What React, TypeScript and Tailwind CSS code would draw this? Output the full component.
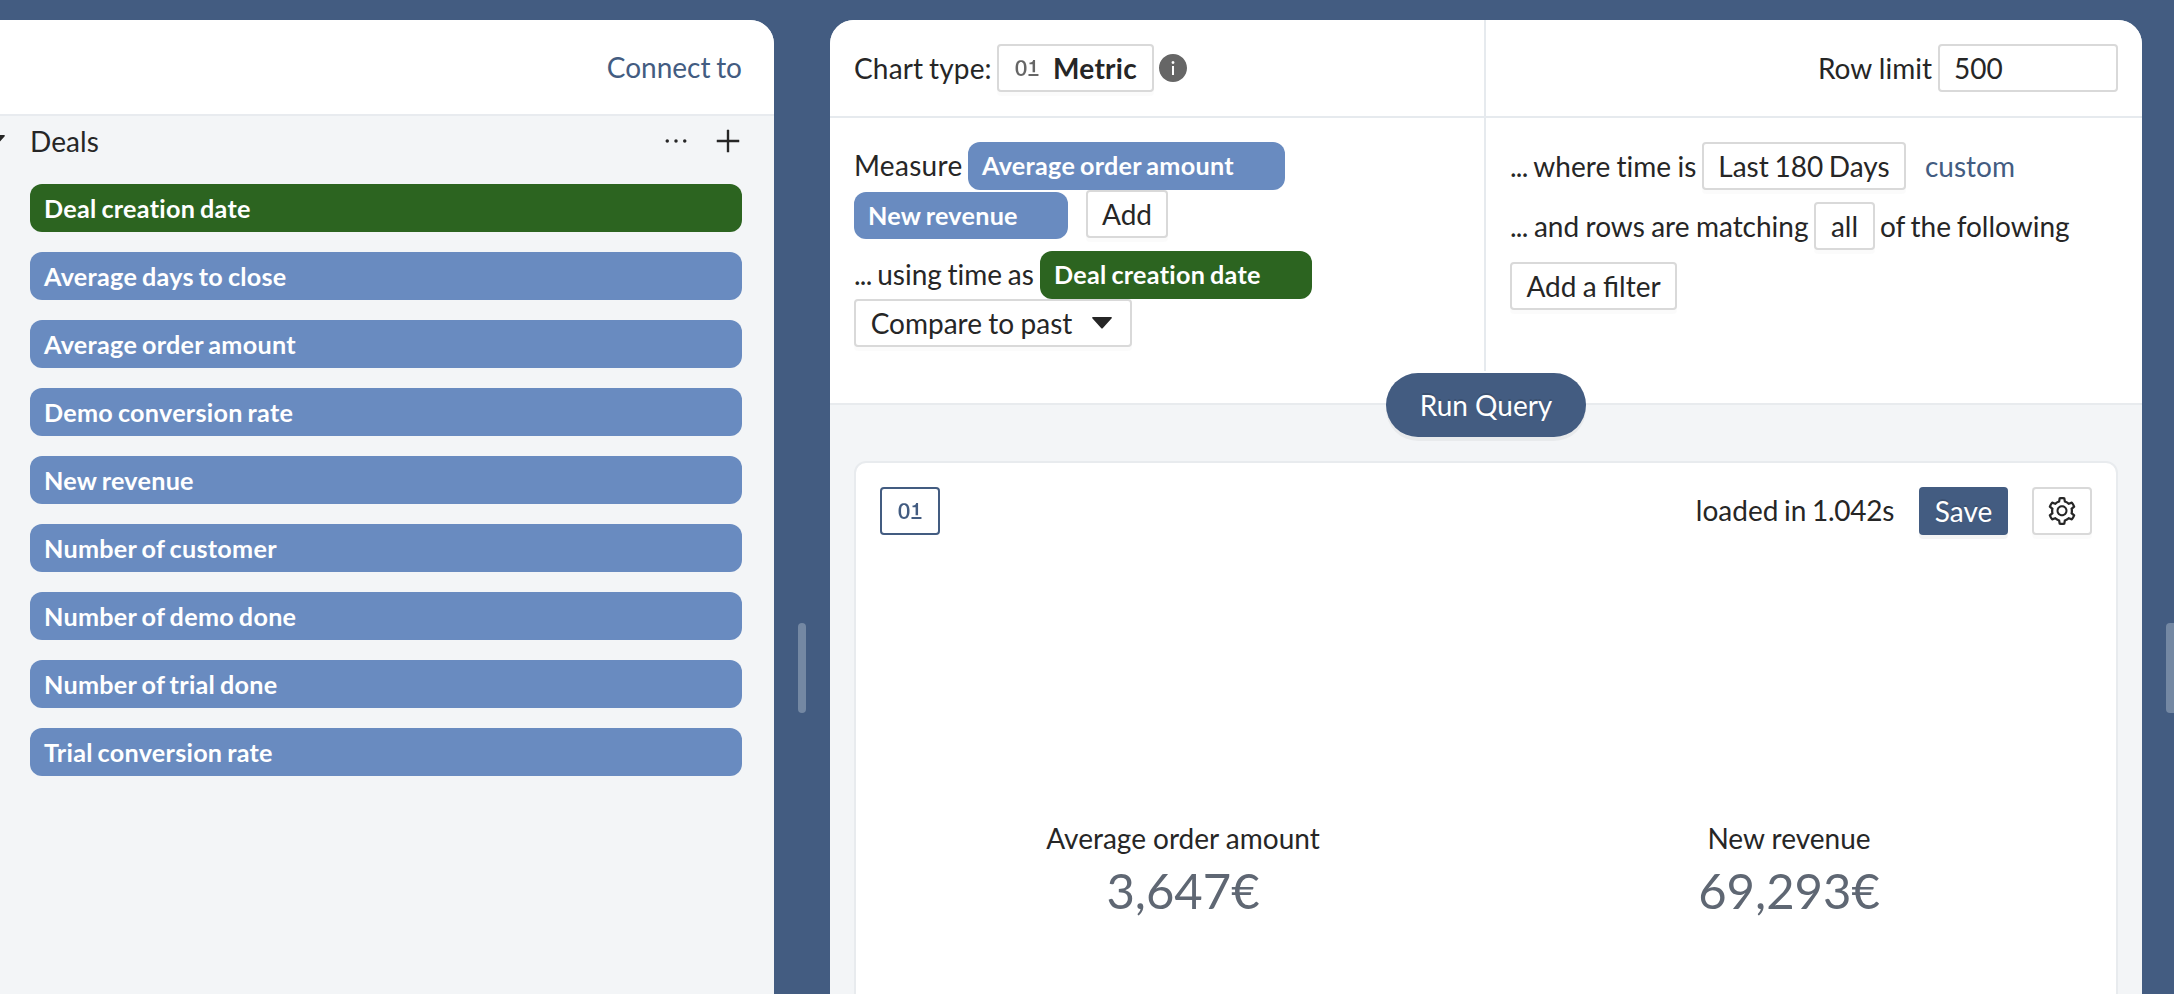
import React from "react";
import {
  AiFillInfoCircle,
  AiOutlineEllipsis,
  AiOutlineFieldBinary,
  AiOutlinePlus,
  AiOutlineSetting,
} from "react-icons/ai";

const measures = [
  "Average days to close",
  "Average order amount",
  "Demo conversion rate",
  "New revenue",
  "Number of customer",
  "Number of demo done",
  "Number of trial done",
  "Trial conversion rate",
];

const metrics = [
  { label: "Average order amount", value: "3,647€" },
  { label: "New revenue", value: "69,293€" },
];

function Pill({ children, className }: { children: React.ReactNode; className: string }) {
  return (
    <div
      className={`flex shrink-0 items-center whitespace-nowrap rounded-xl pl-3.5 pt-px text-[25.2px] font-bold leading-none tracking-[0.26px] text-white ${className}`}
    >
      {children}
    </div>
  );
}

function Button({ children, className = "" }: { children: React.ReactNode; className?: string }) {
  return (
    <button
      className={`flex h-12 shrink-0 items-center justify-center whitespace-nowrap rounded border-2 border-[#d9d9d9] bg-white shadow-[0_4px_0_rgba(0,0,0,0.015)] ${className}`}
    >
      {children}
    </button>
  );
}

function Dots() {
  return <span className="tracking-[-0.75px]">...</span>;
}

function Caret() {
  return (
    <svg className="shrink-0" width="20" height="12" viewBox="0 0 20 12" fill="currentColor">
      <path d="M1 0h18c.8 0 1.200.8.700 1.300L10.700 11.200a1 1 0 0 1-1.400 0L.3 1.300C-.2.8.2 0 1 0z" />
    </svg>
  );
}

function Sidebar() {
  return (
    <aside className="flex h-[974px] w-[774px] shrink-0 flex-col overflow-hidden rounded-tr-3xl bg-[#f3f5f7]">
      <header className="flex h-24 items-center justify-end border-b-2 border-[#e8ebef] bg-white pr-8 text-[#435c81]">
        Connect to
      </header>
      <div className="flex h-[50px] items-center">
        <div className="-ml-[15px] flex w-[45px] items-center">
          <Caret />
        </div>
        <span className="grow pb-px tracking-[0.1px]">Deals</span>
        <AiOutlineEllipsis size={32} />
        <AiOutlinePlus size={32} className="ml-5 mr-[30px]" />
      </div>
      <div className="mt-[18px] flex flex-col gap-5 pl-[30px] pr-8">
        <Pill className="h-12 bg-[#2c6420]">Deal creation date</Pill>
        {measures.map((name) => (
          <Pill key={name} className="h-12 bg-[#698bc0]">
            {name}
          </Pill>
        ))}
      </div>
    </aside>
  );
}

function QueryForm() {
  return (
    <section className="relative h-[385px] shrink-0 border-b-2 border-[#e8ebee] bg-white">
      <div className="flex h-[98px] border-b-2 border-[#e6eaee]">
        <div className="flex w-[656px] items-center border-r-2 border-[#e6eaee] pl-6">
          <span className="w-[143px] whitespace-nowrap tracking-[0.15px]">Chart type:</span>
          <Button className="w-[157px] gap-2.5 pr-[3px]">
            <AiOutlineFieldBinary size={32} className="text-[#666666]" />
            <span className="font-bold tracking-[0.25px]">Metric</span>
          </Button>
          <AiFillInfoCircle size={32} className="ml-[3px] text-[#666666]" />
        </div>
        <div className="flex grow items-center justify-end pr-6">
          <span className="mr-1.5 [word-spacing:0px]">Row limit</span>
          <div className="flex h-12 w-[180px] items-center rounded border-2 border-[#d9d9d9] pl-3.5">500</div>
        </div>
      </div>
      <div className="flex h-[285px] whitespace-nowrap">
        <div className="flex w-[654px] flex-col pl-6 pt-6">
          <div className="flex h-12 items-center">
            <span className="w-[114px] pb-[3px] tracking-[0.3px]">Measure</span>
            <Pill className="h-12 w-[317px] bg-[#698bc0] pb-0.5">Average order amount</Pill>
          </div>
          <div className="flex h-12 items-start">
            <Pill className="mt-0.5 h-[47px] w-[214px] bg-[#698bc0]">New revenue</Pill>
            <Button className="ml-[18px] w-[82px]">Add</Button>
          </div>
          <div className="mt-[13px] flex h-12 items-center">
            <span className="w-[186px] pb-[3px]">
              <Dots /> using time as
            </span>
            <Pill className="h-12 w-[272px] bg-[#2c6420] pb-0.5">Deal creation date</Pill>
          </div>
          <div className="flex">
            <Button className="w-[278px] gap-5 pr-[3px]">
              <span className="[word-spacing:-0.8px]">Compare to past</span>
              <Caret />
            </Button>
          </div>
        </div>
        <div className="h-[253px] w-0.5 bg-[#e6eaee]" />
        <div className="flex grow flex-col gap-3 pl-6 pt-6">
          <div className="flex h-12 items-center">
            <span className="w-48 [word-spacing:-0.8px]">
              <Dots /> where time is
            </span>
            <Button className="w-[204px] [word-spacing:-1.5px]">Last 180 Days</Button>
            <span className="ml-[19px] text-[#435c81]">custom</span>
          </div>
          <div className="flex h-12 items-center">
            <span className="w-[304px] [word-spacing:-0.8px]">
              <Dots /> and rows are matching
            </span>
            <Button className="w-[61px]">all</Button>
            <span className="ml-[5px]">of the following</span>
          </div>
          <div className="flex">
            <Button className="w-[167px] [font-variant-ligatures:normal] [word-spacing:-0.8px]">Add a filter</Button>
          </div>
        </div>
      </div>
      <button className="absolute left-[556px] top-[353px] h-16 w-[200px] rounded-full bg-[#435c81] text-white shadow-[0_4px_0_rgba(0,0,0,0.045)] [text-shadow:0_-2px_0_rgba(0,0,0,0.12)]">
        Run Query
      </button>
    </section>
  );
}

function ResultCard() {
  return (
    <section className="mx-6 mt-14 flex h-[560px] shrink-0 flex-col rounded-t-xl border-2 border-[#e8ebee] bg-white px-6 pt-6">
      <div className="flex h-12 items-center">
        <button className="flex h-12 w-[60px] items-center justify-center rounded border-2 border-[#435c81] text-[#435c81]">
          <AiOutlineFieldBinary size={32} />
        </button>
        <span className="ml-auto mr-[25px] pb-[3px]">
          loaded in <span className="tracking-[-0.3px]">1.042s</span>
        </span>
        <button className="h-12 w-[89px] rounded bg-[#435c81] text-white shadow-[0_4px_0_rgba(0,0,0,0.045)] [text-shadow:0_-2px_0_rgba(0,0,0,0.12)]">
          Save
        </button>
        <Button className="ml-6 w-[60px]">
          <AiOutlineSetting size={32} />
        </Button>
      </div>
      <div className="mt-[281px] grid grid-cols-2 text-center">
        {metrics.map((metric) => (
          <div key={metric.label}>
            <div className="h-11 leading-[44px] [word-spacing:0px]">{metric.label}</div>
            <div className="h-[60px] text-[49px] leading-[60px] text-[#5f6773]">{metric.value}</div>
          </div>
        ))}
      </div>
    </section>
  );
}

export default function App() {
  return (
    <div className="flex h-[994px] w-[2174px] overflow-hidden bg-[#435c81] pt-5 font-['Lato',sans-serif] text-[28px] leading-[44px] text-[#262626] [font-variant-ligatures:none] [word-spacing:-1.5px]">
      <Sidebar />
      <div className="flex w-14 shrink-0 justify-center pt-[603px]">
        <div className="h-[90px] w-2 rounded-full bg-[#7488a3]" />
      </div>
      <main className="flex h-[974px] w-[1312px] shrink-0 flex-col overflow-hidden rounded-t-3xl bg-[#f3f5f7]">
        <QueryForm />
        <ResultCard />
      </main>
      <div className="flex w-8 shrink-0 justify-end pt-[603px]">
        <div className="h-[90px] w-2 rounded-l bg-[#7488a3]" />
      </div>
    </div>
  );
}
